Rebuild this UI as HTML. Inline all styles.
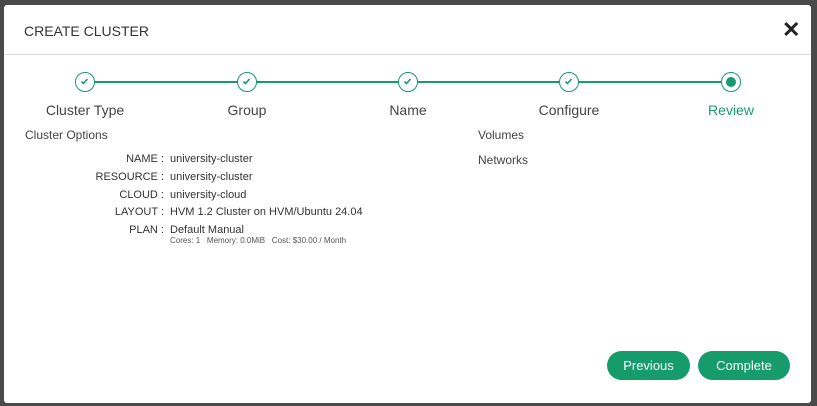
<!DOCTYPE html>
<html><head><style>
body{margin:0;width:817px;height:406px;background:#4a4a4a;position:relative;overflow:hidden;font-family:"Liberation Sans",sans-serif;color:#333}
.m{position:absolute;left:4px;top:5px;width:807px;height:398px;background:#fff;border-radius:3px}
.t{position:absolute;left:24px;top:23px;font-size:14px;color:#333}
.x{position:absolute;left:782px;top:17px;font-size:22px;font-weight:bold;color:#222}
.hr{position:absolute;left:4px;top:54px;width:807px;height:1px;background:#ddd}
.line{position:absolute;left:85px;top:81px;width:646px;height:2px;background:#169b6d}
.c{position:absolute;width:20px;height:20px;border:1.5px solid #169b6d;border-radius:50%;background:#fff;top:72px;box-sizing:border-box}
.c svg{position:absolute;left:4px;top:4px}
.l{position:absolute;top:102px;font-size:14px;width:140px;text-align:center;color:#444}
.s{position:absolute;font-size:12px;color:#444}
.k{position:absolute;width:164px;text-align:right;font-size:11px;color:#333}
.v{position:absolute;left:170px;font-size:11px;color:#333}
.b{position:absolute;top:351px;height:29px;background:#169b6d;color:#fff;border-radius:15px;font-size:13px;text-align:center;line-height:29px}
</style></head><body>
<div class="m"></div>
<div class="t">CREATE CLUSTER</div>
<div class="x">✕</div>
<div class="hr"></div>
<div class="line"></div>
<div class="c" style="left:75px"><svg width="9" height="9"><path d="M1.5 4.5l2 2 4-4.5" stroke="#169b6d" stroke-width="1.6" fill="none"/></svg></div>
<div class="c" style="left:237px"><svg width="9" height="9"><path d="M1.5 4.5l2 2 4-4.5" stroke="#169b6d" stroke-width="1.6" fill="none"/></svg></div>
<div class="c" style="left:398px"><svg width="9" height="9"><path d="M1.5 4.5l2 2 4-4.5" stroke="#169b6d" stroke-width="1.6" fill="none"/></svg></div>
<div class="c" style="left:559px"><svg width="9" height="9"><path d="M1.5 4.5l2 2 4-4.5" stroke="#169b6d" stroke-width="1.6" fill="none"/></svg></div>
<div class="c" style="left:721px"><div style="position:absolute;left:3.5px;top:3.5px;width:10px;height:10px;border-radius:50%;background:#169b6d"></div></div>
<div class="l" style="left:15px">Cluster Type</div>
<div class="l" style="left:177px">Group</div>
<div class="l" style="left:338px">Name</div>
<div class="l" style="left:499px">Configure</div>
<div class="l" style="left:661px;color:#169b6d">Review</div>
<div class="s" style="left:25px;top:128px">Cluster Options</div>
<div class="s" style="left:478px;top:128px">Volumes</div>
<div class="s" style="left:478px;top:153px">Networks</div>
<div class="k" style="top:153px">NAME :</div><div class="v" style="top:153px">university-cluster</div>
<div class="k" style="top:171px">RESOURCE :</div><div class="v" style="top:171px">university-cluster</div>
<div class="k" style="top:189px">CLOUD :</div><div class="v" style="top:189px">university-cloud</div>
<div class="k" style="top:206px">LAYOUT :</div><div class="v" style="top:206px">HVM 1.2 Cluster on HVM/Ubuntu 24.04</div>
<div class="k" style="top:224px">PLAN :</div><div class="v" style="top:224px">Default Manual</div>
<div class="v" style="top:236px;font-size:8px;color:#555">Cores: 1&nbsp;&nbsp;&nbsp;Memory: 0.0MiB&nbsp;&nbsp;&nbsp;Cost: $30.00 / Month</div>
<div class="b" style="left:607px;width:83px">Previous</div>
<div class="b" style="left:698px;width:92px">Complete</div>
</body></html>
